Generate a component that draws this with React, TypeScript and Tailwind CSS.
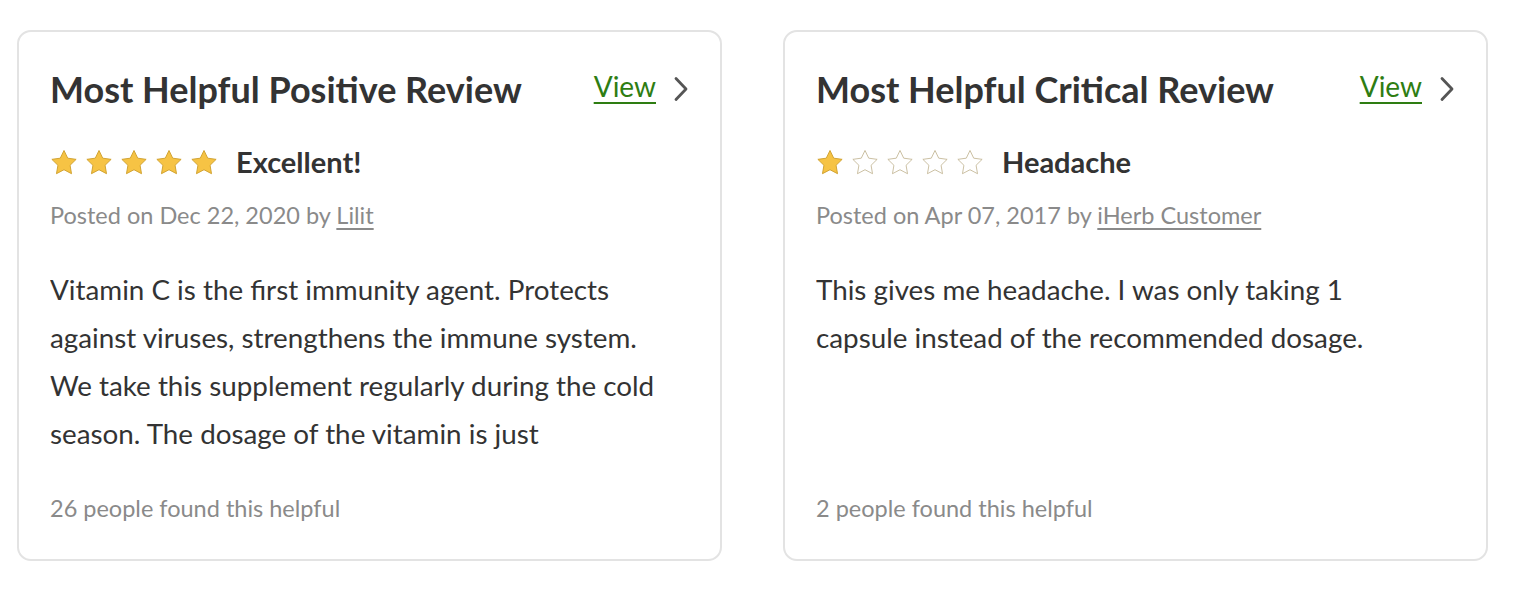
import React from 'react';

const font = { fontFamily: 'Lato, "Open Sans", sans-serif' };

function Star({ filled }: { filled: boolean }) {
  return (
    <svg width="28" height="27" viewBox="0 0 24 23" className="shrink-0">
      <path
        d="M12 1.2l3.2 6.6 7.2 1-5.2 5.1 1.25 7.2L12 17.7l-6.45 3.4 1.25-7.2L1.6 8.8l7.2-1z"
        fill={filled ? '#f6c344' : '#ffffff'}
        stroke={filled ? '#cf9f2c' : '#bfb28e'}
        strokeWidth={filled ? 0.8 : 0.7}
        strokeLinejoin="round"
      />
    </svg>
  );
}

type Review = {
  heading: string;
  rating: number;
  title: string;
  date: string;
  author: string;
  body: string;
  helpful: number;
};

const reviews: Review[] = [
  {
    heading: 'Most Helpful Positive Review',
    rating: 5,
    title: 'Excellent!',
    date: 'Dec 22, 2020',
    author: 'Lilit',
    body: 'Vitamin C is the first immunity agent. Protects against viruses, strengthens the immune system. We take this supplement regularly during the cold season. The dosage of the vitamin is just',
    helpful: 26,
  },
  {
    heading: 'Most Helpful Critical Review',
    rating: 1,
    title: 'Headache',
    date: 'Apr 07, 2017',
    author: 'iHerb Customer',
    body: 'This gives me headache. I was only taking 1 capsule instead of the recommended dosage.',
    helpful: 2,
  },
];

function ReviewCard({ review }: { review: Review }) {
  return (
    <div className="w-[705px] h-[531px] shrink-0 rounded-[14px] border-2 border-[#e3e3e3] bg-white px-[31px] pt-[35px] pb-[36px] flex flex-col">
      {/* Header */}
      <div className="flex items-start justify-between">
        <h3 className="text-[36px] leading-[44px] font-bold text-[#333333]">{review.heading}</h3>
        <a href="#" className="flex items-start gap-[17px] mt-[1px] text-[28px] leading-[36px] text-[#2e7d12] underline underline-offset-[5px] decoration-[2px]">
          View
          <svg width="16" height="26" viewBox="0 0 16 26" className="mt-[8px]">
            <path d="M3 2.5l10 10.5L3 23.5" fill="none" stroke="#555555" strokeWidth="2.8" strokeLinecap="round" strokeLinejoin="round" />
          </svg>
        </a>
      </div>

      {/* Rating */}
      <div className="flex items-center h-[36px] mt-[33px]">
        <div className="flex gap-[7px]">
          {[0, 1, 2, 3, 4].map(i => (
            <Star key={i} filled={i < review.rating} />
          ))}
        </div>
        <span className="ml-[18px] text-[29px] leading-[36px] font-bold text-[#333333]">{review.title}</span>
      </div>

      <p className="mt-[20px] text-[23.5px] leading-[30px] text-[#8a8a8a]">
        Posted on {review.date} by{' '}
        <a href="#" className="underline underline-offset-[4px] decoration-[1.5px]">{review.author}</a>
      </p>

      <p className="mt-[36px] h-[192px] overflow-hidden text-[27.8px] leading-[48px] text-[#333333] pr-[24px]">{review.body}</p>

      <p className="mt-auto text-[23.5px] leading-[30px] text-[#8a8a8a]">{review.helpful} people found this helpful</p>
    </div>
  );
}

export default function App() {
  return (
    <div className="w-[1516px] h-[596px] bg-white pl-[17px] pt-[30px]" style={font}>
      <div className="flex gap-[61px]">
        {reviews.map(r => (
          <ReviewCard key={r.heading} review={r} />
        ))}
      </div>
    </div>
  );
}
